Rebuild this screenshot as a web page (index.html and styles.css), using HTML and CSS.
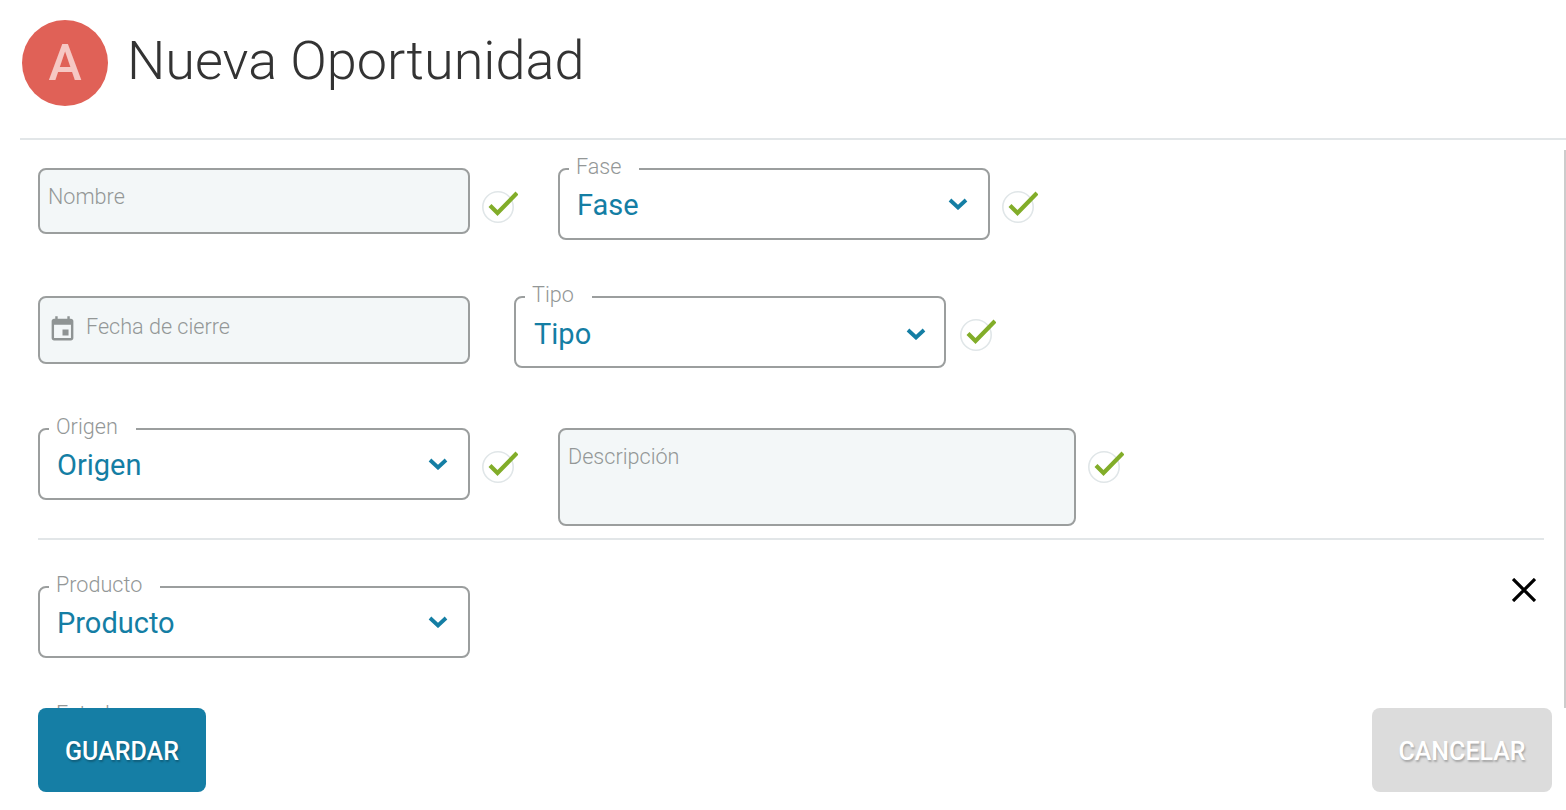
FILE: index.html
```html
<!DOCTYPE html>
<html>
<head>
  <title>Nueva Oportunidad</title>
  <link rel="stylesheet" href="styles.css">
</head>
<body>
  <header class="page-header">
    <div class="avatar">A</div>
    <h1>Nueva Oportunidad</h1>
  </header>

  <main class="form-scroll">
    <div class="scroll-thumb"></div>

    <div class="row row-first">
      <div class="group">
        <div class="field text-field field-nombre">Nombre</div>
        <svg class="check" viewBox="0 0 36 34"><circle cx="16" cy="17" r="15.2"/><path d="M8 15.5l7.5 7.5L35 3"/></svg>
      </div>
      <div class="group">
        <div class="field select-field">
          <span class="select-label">Fase</span>
          <span class="select-value">Fase</span>
          <svg class="chevron" viewBox="0 0 20 12"><path d="M2 2l8 7.5L18 2"/></svg>
        </div>
        <svg class="check" viewBox="0 0 36 34"><circle cx="16" cy="17" r="15.2"/><path d="M8 15.5l7.5 7.5L35 3"/></svg>
      </div>
    </div>

    <div class="row row-second">
      <div class="group group-nocheck">
        <div class="field text-field field-fecha">
          <svg class="calendar" viewBox="0 0 24 24"><path d="M17 12h-5v5h5v-5zM16 1v2H8V1H6v2H5c-1.11 0-1.99.9-1.99 2L3 19c0 1.1.89 2 2 2h14c1.1 0 2-.9 2-2V5c0-1.1-.9-2-2-2h-1V1h-2zm3 18H5V8h14v11z"/></svg>
          Fecha de cierre
        </div>
      </div>
      <div class="group group-tipo">
        <div class="field select-field">
          <span class="select-label">Tipo</span>
          <span class="select-value">Tipo</span>
          <svg class="chevron" viewBox="0 0 20 12"><path d="M2 2l8 7.5L18 2"/></svg>
        </div>
        <svg class="check" viewBox="0 0 36 34"><circle cx="16" cy="17" r="15.2"/><path d="M8 15.5l7.5 7.5L35 3"/></svg>
      </div>
    </div>

    <div class="row row-third">
      <div class="group">
        <div class="field select-field">
          <span class="select-label">Origen</span>
          <span class="select-value">Origen</span>
          <svg class="chevron" viewBox="0 0 20 12"><path d="M2 2l8 7.5L18 2"/></svg>
        </div>
        <svg class="check" viewBox="0 0 36 34"><circle cx="16" cy="17" r="15.2"/><path d="M8 15.5l7.5 7.5L35 3"/></svg>
      </div>
      <div class="group">
        <div class="field text-field field-descripcion">Descripción</div>
        <svg class="check" viewBox="0 0 36 34"><circle cx="16" cy="17" r="15.2"/><path d="M8 15.5l7.5 7.5L35 3"/></svg>
      </div>
    </div>

    <hr class="divider">

    <div class="row row-product">
      <div class="field select-field">
        <span class="select-label">Producto</span>
        <span class="select-value">Producto</span>
        <svg class="chevron" viewBox="0 0 20 12"><path d="M2 2l8 7.5L18 2"/></svg>
      </div>
      <svg class="close" viewBox="0 0 24 24"><path d="M1 1l22 22M23 1L1 23"/></svg>
    </div>

    <div class="row">
      <div class="field select-field">
        <span class="select-label">Estado</span>
      </div>
    </div>
  </main>

  <footer class="page-footer">
    <button class="btn btn-save" type="button">GUARDAR</button>
    <button class="btn btn-cancel" type="button">CANCELAR</button>
  </footer>
</body>
</html>
```

FILE: styles.css
```css
* {
  box-sizing: border-box;
}

html, body {
  height: 100%;
}

body {
  margin: 0;
  display: flex;
  flex-direction: column;
  height: 810px;
  overflow: hidden;
  background-color: #fff;
  font-family: Roboto, "Liberation Sans", sans-serif;
}

.page-header {
  display: flex;
  align-items: flex-start;
  height: 140px;
  margin-left: 20px;
  padding: 20px 0 0 2px;
  border-bottom: 2px solid #e2e6e8;
}

.avatar {
  width: 86px;
  height: 86px;
  border-radius: 50%;
  background-color: #e06157;
  color: #f6c8c4;
  font-size: 50px;
  font-weight: 500;
  line-height: 86px;
  text-align: center;
}

h1 {
  margin: 8px 0 0 19px;
  color: #333;
  font-size: 54px;
  font-weight: 300;
  line-height: 66px;
}

.form-scroll {
  position: relative;
  flex: 1;
  min-height: 0;
  padding: 28px 22px 0 38px;
  overflow: hidden;
}

.scroll-thumb {
  position: absolute;
  top: 10px;
  right: 0;
  bottom: 0;
  width: 2px;
  background-color: #ccc;
}

.row {
  display: flex;
  align-items: flex-start;
}

.row-first {
  height: 128px;
}

.row-second {
  height: 132px;
}

.row-third {
  height: 110px;
}

.row-product {
  justify-content: space-between;
  height: 129px;
}

.group {
  display: flex;
  align-items: flex-start;
  margin-right: 40px;
}

.group-nocheck {
  margin-right: 44px;
}

.field {
  position: relative;
  width: 432px;
  border: 2px solid #9b9e9e;
  border-radius: 8px;
}

.text-field {
  padding: 14px 8px;
  background-color: #f3f7f8;
  color: #939797;
  font-size: 21.6px;
  font-weight: 300;
  line-height: 26px;
}

.field-nombre {
  height: 66px;
}

.field-fecha {
  display: flex;
  align-items: flex-start;
  height: 68px;
  padding-top: 16px;
}

.field-descripcion {
  width: 518px;
  height: 98px;
}

.calendar {
  width: 29px;
  height: 29px;
  margin: 1px 9px 0 0;
  fill: #8f9494;
}

.select-field {
  height: 72px;
  padding: 19px 17px 0;
}

.select-label {
  position: absolute;
  top: -16px;
  left: 9px;
  padding: 0 18px 0 7px;
  background-color: #fff;
  color: #939797;
  font-size: 21.6px;
  font-weight: 300;
  line-height: 26px;
}

.select-value {
  color: #147ea4;
  font-size: 29px;
  font-weight: 400;
  line-height: 32px;
}

.chevron {
  position: absolute;
  top: 28px;
  right: 20px;
  width: 20px;
  height: 12px;
  fill: none;
  stroke: #147ea4;
  stroke-width: 3.8;
}

.group-tipo .select-field {
  padding: 20px 18px 0;
}

.group-tipo .chevron {
  top: 30px;
  right: 18px;
}

.group-tipo .check {
  margin-left: 14px;
}

.check {
  flex: none;
  width: 36px;
  height: 34px;
  margin: 22px 0 0 12px;
}

.check circle {
  fill: none;
  stroke: #e0e6e8;
  stroke-width: 1.6;
}

.check path {
  fill: none;
  stroke: #82ad29;
  stroke-width: 4.2;
}

.divider {
  height: 2px;
  margin: 0 0 46px;
  border: 0;
  background-color: #e2e6e8;
}

.close {
  width: 24px;
  height: 24px;
  margin: -8px 8px 0 0;
  fill: none;
  stroke: #000;
  stroke-width: 3.2;
}

.page-footer {
  display: flex;
  justify-content: space-between;
  height: 102px;
  padding: 0 14px 18px 38px;
}

.btn {
  height: 84px;
  padding-top: 3px;
  border: none;
  border-radius: 8px;
  color: #fff;
  font-family: Roboto, "Liberation Sans", sans-serif;
  font-size: 25px;
  font-weight: 500;
  text-shadow: 1px 2px 2px rgba(0, 0, 0, 0.25);
}

.btn-save {
  width: 168px;
  background-color: #157ea5;
}

.btn-cancel {
  width: 180px;
  background-color: #dcdcdc;
}
```
